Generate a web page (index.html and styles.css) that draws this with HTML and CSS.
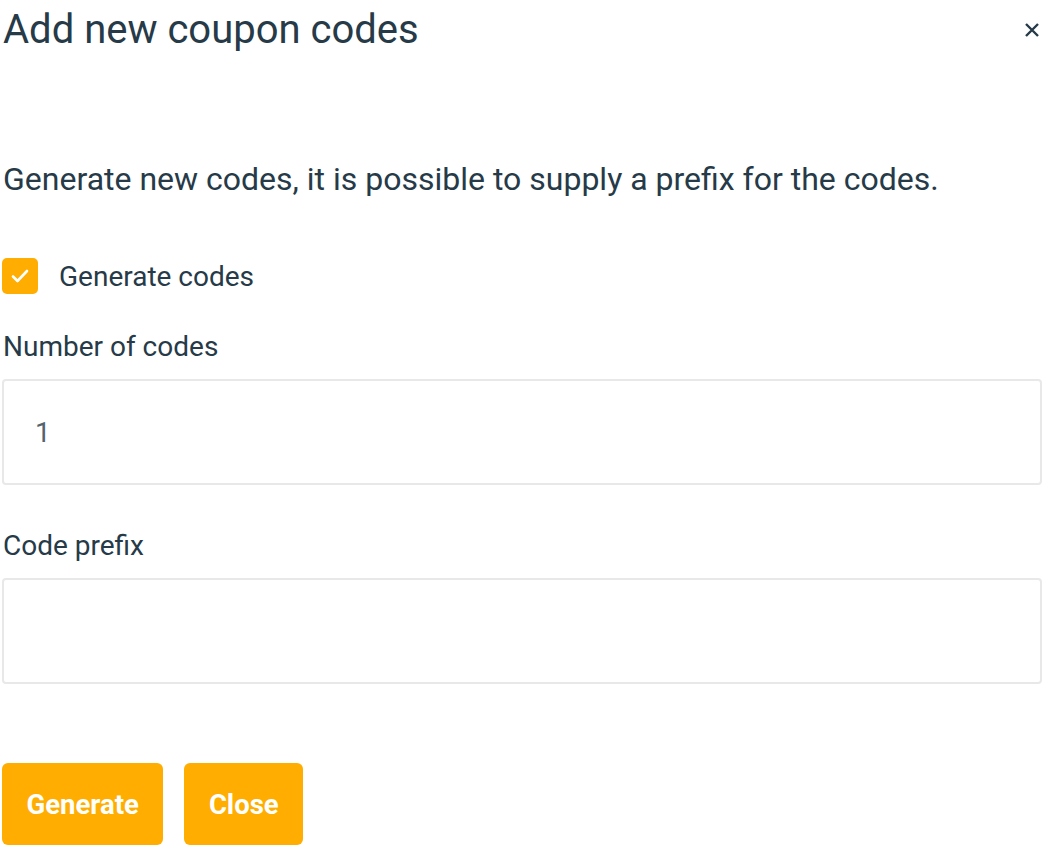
FILE: index.html
```html
<!DOCTYPE html>
<html>
<head>
<meta charset="utf-8">
<link rel="stylesheet" href="styles.css">
</head>
<body>
<div class="modal">
  <div class="header">
    <h1 class="title">Add new coupon codes</h1>
    <button class="close-x" aria-label="Close">
      <svg width="16" height="16" viewBox="0 0 16 16"><path d="M2 2L14 14M14 2L2 14" stroke="#263a48" stroke-width="2.4" stroke-linecap="butt"/></svg>
    </button>
  </div>
  <p class="intro">Generate new codes, it is possible to supply a prefix for the codes.</p>
  <label class="check-row">
    <span class="checkbox">
      <svg width="36" height="36" viewBox="0 0 36 36"><path d="M11 18.5L15.5 23L25 13" fill="none" stroke="#fff" stroke-width="2.6" stroke-linecap="round" stroke-linejoin="round"/></svg>
    </span>
    <span class="check-label">Generate codes</span>
  </label>
  <div class="field field-first">
    <label class="field-label">Number of codes</label>
    <div class="input">1</div>
  </div>
  <div class="field">
    <label class="field-label">Code prefix</label>
    <div class="input"></div>
  </div>
  <div class="actions">
    <button class="btn">Generate</button>
    <button class="btn">Close</button>
  </div>
</div>
</body>
</html>
```
FILE: styles.css
```css
* { box-sizing: border-box; }
html, body { margin: 0; padding: 0; background: #fff; }
body { font-family: Roboto, "Noto Sans", sans-serif; color: #263a48; }
.modal { padding: 0 3px 0 2px; width: 1045px; }
.header { display: flex; justify-content: space-between; align-items: flex-start; height: 60px; }
.title { margin: 0; font-size: 40px; font-weight: 400; line-height: 60px; padding-left: 1px; }
.close-x { border: 0; background: none; padding: 0; margin: 22px 2px 0 0; width: 16px; height: 16px; display: flex; }
.intro { margin: 99px 0 0 1px; font-size: 32px; line-height: 40px; }
.check-row { display: flex; align-items: center; gap: 21px; margin-top: 59px; height: 36px; }
.checkbox { width: 36px; height: 36px; border-radius: 5px; background: #ffad00; display: flex; }
.check-label { font-size: 28px; }
.field { margin-top: 45px; }
.field-first { margin-top: 37px; }
.field-label { display: block; font-size: 28px; line-height: 32px; padding-left: 1px; }
.input { margin-top: 16px; height: 106px; border: 2px solid #e8e8e8; border-radius: 4px; font-size: 28px; color: #56636d; padding: 0 31px; display: flex; align-items: center; }
.actions { display: flex; gap: 21px; margin-top: 79px; }
.btn { border: 0; background: #ffad00; color: #fff; font-family: Roboto, sans-serif; font-weight: 700; font-size: 27.5px; height: 82px; padding: 0 24.5px; border-radius: 6px; }
```
